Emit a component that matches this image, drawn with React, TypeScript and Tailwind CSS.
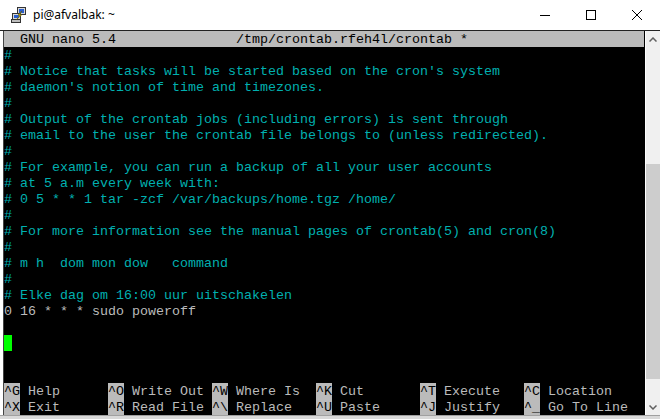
import React from 'react';

const MONO = { fontFamily: '"Liberation Mono", "Courier New", monospace' };

const LINES: { text: string; comment: boolean }[] = [
  { text: '#', comment: true },
  { text: "# Notice that tasks will be started based on the cron's system", comment: true },
  { text: "# daemon's notion of time and timezones.", comment: true },
  { text: '#', comment: true },
  { text: '# Output of the crontab jobs (including errors) is sent through', comment: true },
  { text: '# email to the user the crontab file belongs to (unless redirected).', comment: true },
  { text: '#', comment: true },
  { text: '# For example, you can run a backup of all your user accounts', comment: true },
  { text: '# at 5 a.m every week with:', comment: true },
  { text: '# 0 5 * * 1 tar -zcf /var/backups/home.tgz /home/', comment: true },
  { text: '#', comment: true },
  { text: '# For more information see the manual pages of crontab(5) and cron(8)', comment: true },
  { text: '#', comment: true },
  { text: '# m h  dom mon dow   command', comment: true },
  { text: '#', comment: true },
  { text: '# Elke dag om 16:00 uur uitschakelen', comment: true },
  { text: '0 16 * * * sudo poweroff', comment: false },
];

const SHORTCUTS = [
  [
    ['^G', 'Help'],
    ['^O', 'Write Out'],
    ['^W', 'Where Is'],
    ['^K', 'Cut'],
    ['^T', 'Execute'],
    ['^C', 'Location'],
  ],
  [
    ['^X', 'Exit'],
    ['^R', 'Read File'],
    ['^\\', 'Replace'],
    ['^U', 'Paste'],
    ['^J', 'Justify'],
    ['^_', 'Go To Line'],
  ],
];

const PuttyIcon = () => (
  <svg width="16" height="16" viewBox="0 0 16 16">
    {/* back computer */}
    <rect x="6.5" y="0.5" width="8" height="7" fill="#d8d8d8" stroke="#333" />
    <rect x="8" y="2" width="5" height="4" fill="#2a5fcf" />
    {/* front computer */}
    <rect x="1.5" y="6.5" width="8" height="6" fill="#d8d8d8" stroke="#333" />
    <rect x="3" y="8" width="5" height="3" fill="#2a5fcf" />
    <rect x="0.5" y="12.5" width="9" height="3" fill="#bdbdbd" stroke="#333" />
    {/* bolt */}
    <path d="M11 4 L7 8 L9 8.5 L5.5 12.5 L10.5 8 L8.5 7.5 Z" fill="#f5e000" stroke="#6b5a00" strokeWidth="0.6" />
  </svg>
);

const TitleBar = () => (
  <div className="h-[30px] flex items-center bg-white">
    <div className="pl-[11px] pr-[6px] flex items-center">
      <PuttyIcon />
    </div>
    <span
      className="text-[12px] text-black"
      style={{ fontFamily: '"Segoe UI", "Noto Sans", "Liberation Sans", sans-serif' }}
    >
      pi@afvalbak: ~
    </span>
    <div className="ml-auto flex h-full">
      <div className="w-[46px] flex items-center justify-center">
        <div className="w-[10px] h-px bg-black" />
      </div>
      <div className="w-[46px] flex items-center justify-center">
        <div className="w-[10px] h-[10px] border border-black" />
      </div>
      <div className="w-[46px] flex items-center justify-center">
        <svg width="10" height="10" viewBox="0 0 10 10">
          <path d="M0 0 L10 10 M10 0 L0 10" stroke="#000" strokeWidth="1" />
        </svg>
      </div>
    </div>
  </div>
);

// one 80-column terminal row, 16px high
const Row = ({ children }: { children?: React.ReactNode }) => (
  <div className="h-[16px] leading-[18px] whitespace-pre">{children}</div>
);

const Terminal = () => (
  <div className="w-[640px] bg-black text-[13.3333px]" style={MONO}>
    <Row>
      <div className="bg-[#bbbbbb] text-black h-full">
        {'  GNU nano 5.4               /tmp/crontab.rfeh4l/crontab *'}
      </div>
    </Row>
    {LINES.map((line, i) => (
      <Row key={i}>
        <span className={line.comment ? 'text-[#00b0b0]' : 'text-[#bbbbbb]'}>{line.text}</span>
      </Row>
    ))}
    <Row />
    <Row>
      <span className="inline-block w-[8px] h-[16px] bg-[#00ff00] align-top" />
    </Row>
    <Row />
    <Row />
    {SHORTCUTS.map((row, r) => (
      <Row key={r}>
        <div className="flex h-full">
          {row.map(([key, label]) => (
            <div key={key} className="w-[104px] flex h-full">
              <span className="inline-block h-[16px] bg-[#bbbbbb] text-black">{key}</span>
              <span className="text-[#bbbbbb]">{' ' + label}</span>
            </div>
          ))}
        </div>
      </Row>
    ))}
  </div>
);

const ScrollBar = () => (
  <div className="flex-1 bg-[#f0f0f0] flex flex-col">
    <div className="h-[17px] flex items-center justify-center">
      <svg width="8" height="5" viewBox="0 0 8 5">
        <path d="M0.5 4.5 L4 1 L7.5 4.5" stroke="#606060" strokeWidth="1.5" fill="none" />
      </svg>
    </div>
    <div className="h-[116px]" />
    <div className="h-[215px] bg-[#cdcdcd]" />
    <div className="flex-1 flex items-end justify-center pb-[5px]">
      <svg width="8" height="5" viewBox="0 0 8 5">
        <path d="M0.5 0.5 L4 4 L7.5 0.5" stroke="#606060" strokeWidth="1.5" fill="none" />
      </svg>
    </div>
  </div>
);

const App = () => {
  return (
    <div className="w-[660px] h-[419px] bg-white flex flex-col overflow-hidden">
      <TitleBar />
      <div className="h-px bg-[#222]" />
      <div className="flex h-[384px]">
        <div className="w-[3px] bg-white" />
        <div className="w-px bg-[#444]" />
        <Terminal />
        <div className="w-px bg-black" />
        <div className="w-px bg-white" />
        <ScrollBar />
      </div>
      <div className="flex-1 bg-[#d9d9d9] border-t border-[#a0a0a0]" />
    </div>
  );
};

export default App;
